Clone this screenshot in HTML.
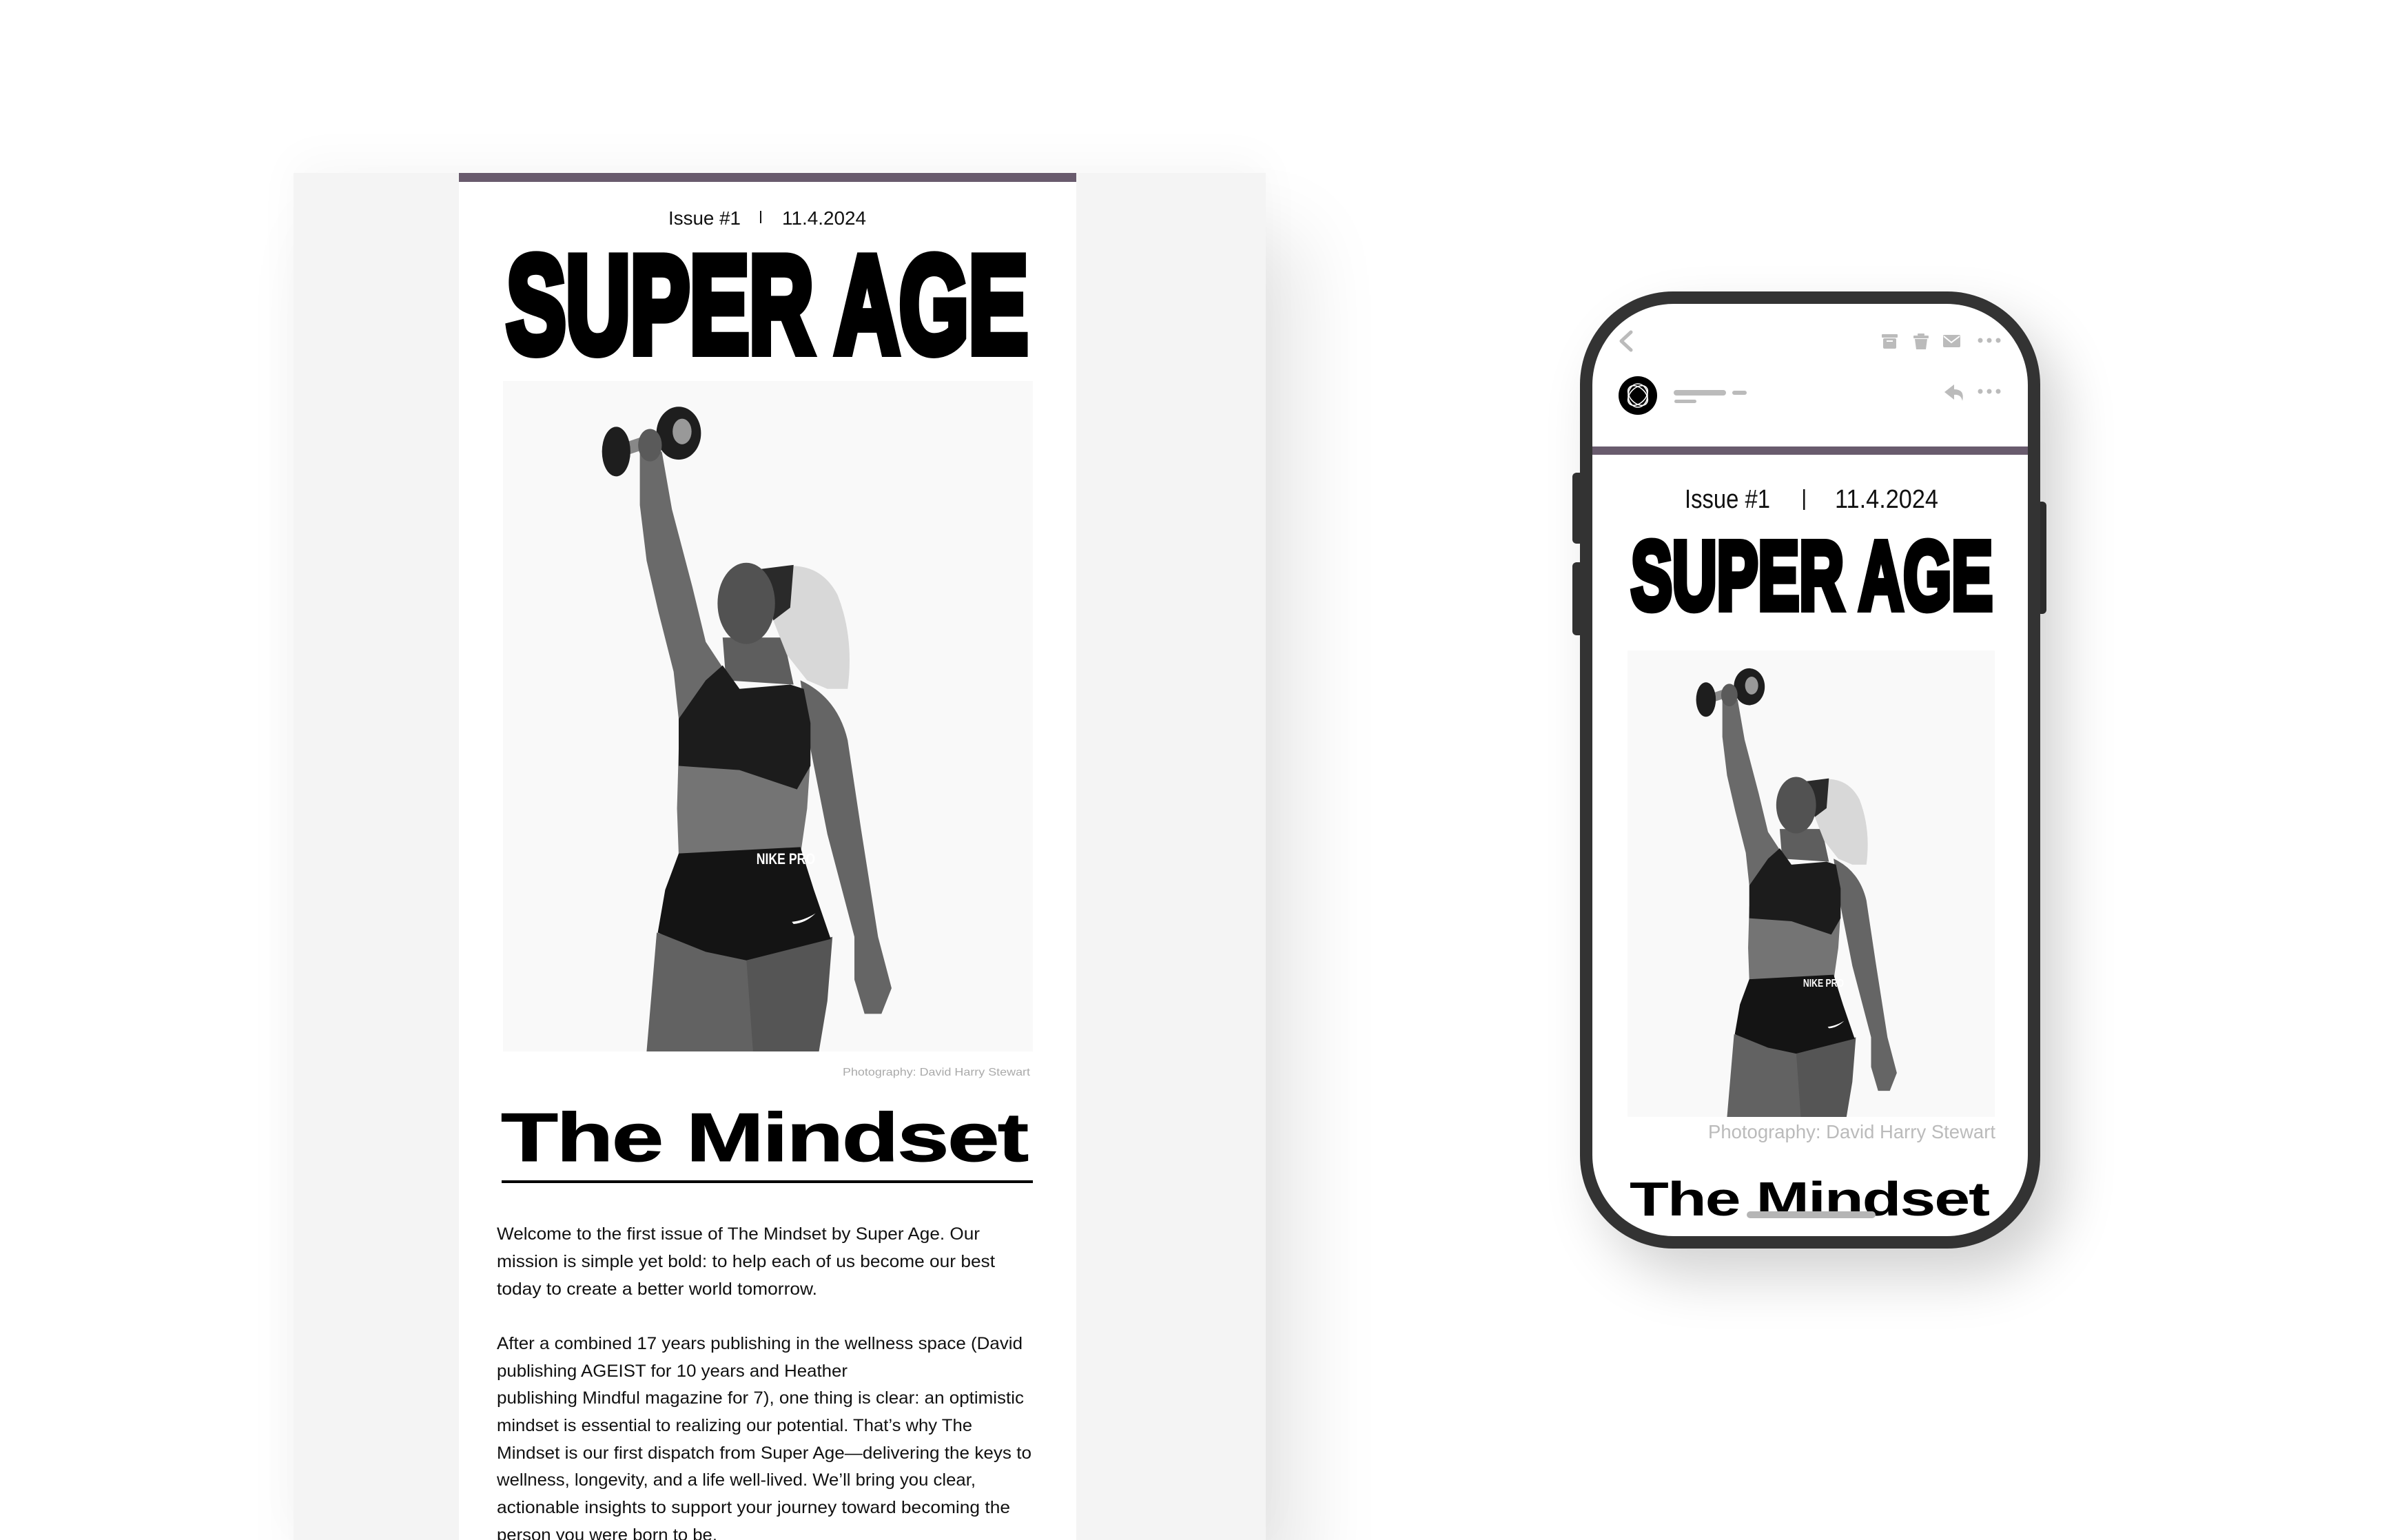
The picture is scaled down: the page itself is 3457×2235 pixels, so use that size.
<!DOCTYPE html>
<html><head><meta charset="utf-8">
<style>
html,body{margin:0;padding:0;background:#fff;width:3457px;height:2235px;overflow:hidden;}
body{position:relative;font-family:"Liberation Sans",sans-serif;}
.panel{position:absolute;left:426px;top:251px;width:1411px;height:1984px;background:#f4f4f4;box-shadow:50px 90px 110px rgba(0,0,0,0.10),0 -20px 60px rgba(0,0,0,0.03);}
.col{position:absolute;left:666px;top:251px;width:896px;height:1984px;background:#fff;}
.bar{position:absolute;left:666px;top:251px;width:896px;height:13px;background:#695b6d;}
.phone{position:absolute;left:2293px;top:423px;width:668px;height:1389px;border-radius:135px;background:#333;box-shadow:30px 40px 80px rgba(0,0,0,0.18);}
.screen{position:absolute;left:18px;top:18px;right:18px;bottom:18px;border-radius:118px;background:#fff;overflow:hidden;}
.btn{position:absolute;background:#333;border-radius:6px;}
svg.ov{position:absolute;left:0;top:0;}
</style></head><body>
<div class="panel"></div>
<div class="col"></div>
<div class="bar"></div>
<div class="btn" style="left:2282px;top:686px;width:16px;height:103px"></div>
<div class="btn" style="left:2282px;top:816px;width:16px;height:106px"></div>
<div class="btn" style="left:2956px;top:728px;width:14px;height:163px"></div>
<div class="phone"><div class="screen"></div></div>

<svg class="ov" width="3457" height="2235" viewBox="0 0 3457 2235" xmlns="http://www.w3.org/2000/svg">
<defs>
<g id="fig">
  <rect x="0" y="0" width="1568" height="1568" fill="#f9f9f9"/>
  <path d="M455,1290 L720,1350 L790,1568 L425,1568 Z" fill="#626262"/>
  <path d="M720,1350 L975,1300 L960,1450 L935,1568 L740,1568 Z" fill="#555"/>
  <path d="M880,700 Q990,740 1020,840 L1060,1050 L1110,1300 L1150,1420 L1120,1480 L1070,1480 L1040,1400 L1040,1300 L960,1060 L910,860 Z" fill="#656565"/>
  <path d="M405,170 L470,165 L500,300 L560,480 L600,610 L650,670 L560,760 L520,790 L505,680 L460,540 L425,420 L405,290 Z" fill="#6a6a6a"/>
  <path d="M520,860 L910,880 L900,1000 L880,1110 L520,1110 L515,1000 Z" fill="#747474"/>
  <path d="M650,600 L830,600 L860,710 L660,700 Z" fill="#5e5e5e"/>
  <path d="M790,440 Q930,410 990,500 Q1040,600 1020,720 L960,720 L900,700 L840,640 L800,560 Z" fill="#d8d8d8"/>
  <path d="M760,440 L860,430 L850,530 L800,560 Z" fill="#2a2a2a"/>
  <ellipse cx="720" cy="520" rx="85" ry="95" fill="#525252"/>
  <path d="M520,790 L600,700 L650,665 L700,720 L850,710 L890,720 L910,800 L910,900 L870,955 L700,910 L520,900 Z" fill="#1c1c1c"/>
  <path d="M520,1105 L880,1090 L920,1190 L970,1305 L720,1355 L600,1335 L458,1290 L480,1190 Z" fill="#141414"/>
  <text x="750" y="1130" font-family="Liberation Sans,sans-serif" font-weight="bold" font-size="36" fill="#fff">NIKE PRO</text>
  <path d="M855,1265 Q890,1262 925,1245 Q895,1268 860,1270 Z" fill="#fff"/>
  <rect x="350" y="130" width="130" height="30" fill="#888" transform="rotate(-15 415 145)"/>
  <ellipse cx="335" cy="165" rx="42" ry="58" fill="#1e1e1e"/>
  <ellipse cx="520" cy="122" rx="66" ry="62" fill="#1e1e1e"/>
  <ellipse cx="530" cy="118" rx="28" ry="30" fill="#999"/>
  <ellipse cx="435" cy="150" rx="35" ry="38" fill="#5a5a5a"/>
</g>
<clipPath id="scr"><rect x="2311" y="441" width="632" height="1353" rx="118"/></clipPath>
</defs>

<g font-family="Liberation Sans, sans-serif">
  <text x="970" y="326" font-size="28" fill="#111" textLength="105" lengthAdjust="spacingAndGlyphs">Issue #1</text>
  <rect x="1103" y="306" width="2" height="18" fill="#111"/>
  <text x="1135" y="326" font-size="28" fill="#111" textLength="122" lengthAdjust="spacingAndGlyphs">11.4.2024</text>
  <text x="735" y="511" font-size="200" font-weight="bold" fill="#000" stroke="#000" stroke-width="14" stroke-linejoin="miter" textLength="757" lengthAdjust="spacingAndGlyphs">SUPER AGE</text>
  <g transform="translate(730,553) scale(0.4904,0.6205)"><use href="#fig"/></g>
  <text x="1495" y="1561" font-size="16" fill="#aaa" text-anchor="end" textLength="272" lengthAdjust="spacingAndGlyphs">Photography: David Harry Stewart</text>
  <text transform="translate(727,1685) scale(1.36,1)" x="0" y="0" font-size="100" font-weight="bold" fill="#000" letter-spacing="-2" stroke="#000" stroke-width="1">The Mindset</text>
  <rect x="728" y="1713" width="771" height="4" fill="#000"/>
  <g font-size="25" fill="#111">
    <text x="721" y="1799" textLength="701" lengthAdjust="spacingAndGlyphs">Welcome to the first issue of The Mindset by Super Age. Our</text>
    <text x="721" y="1839" textLength="723" lengthAdjust="spacingAndGlyphs">mission is simple yet bold: to help each of us become our best</text>
    <text x="721" y="1879" textLength="465" lengthAdjust="spacingAndGlyphs">today to create a better world tomorrow.</text>
    <text x="721" y="1958" textLength="763" lengthAdjust="spacingAndGlyphs">After a combined 17 years publishing in the wellness space (David</text>
    <text x="721" y="1998" textLength="509" lengthAdjust="spacingAndGlyphs">publishing AGEIST for 10 years and Heather</text>
    <text x="721" y="2037" textLength="765" lengthAdjust="spacingAndGlyphs">publishing Mindful magazine for 7), one thing is clear: an optimistic</text>
    <text x="721" y="2077" textLength="690" lengthAdjust="spacingAndGlyphs">mindset is essential to realizing our potential. That’s why The</text>
    <text x="721" y="2117" textLength="776" lengthAdjust="spacingAndGlyphs">Mindset is our first dispatch from Super Age—delivering the keys to</text>
    <text x="721" y="2156" textLength="695" lengthAdjust="spacingAndGlyphs">wellness, longevity, and a life well-lived. We’ll bring you clear,</text>
    <text x="721" y="2196" textLength="745" lengthAdjust="spacingAndGlyphs">actionable insights to support your journey toward becoming the</text>
    <text x="721" y="2236" textLength="320" lengthAdjust="spacingAndGlyphs">person you were born to be.</text>
  </g>
</g>

<g clip-path="url(#scr)" font-family="Liberation Sans, sans-serif">
  <path d="M2367,482 L2353,495 L2367,508" fill="none" stroke="#bbb" stroke-width="5" stroke-linecap="round" stroke-linejoin="round"/>
  <rect x="2731" y="485" width="23" height="5" rx="1" fill="#bbb"/>
  <rect x="2733" y="491" width="19" height="15" rx="2" fill="#bbb"/>
  <rect x="2738" y="494" width="9" height="2" fill="#fff"/>
  <rect x="2783" y="484" width="10" height="3" rx="1" fill="#bbb"/>
  <rect x="2777" y="487" width="22" height="4" rx="1" fill="#bbb"/>
  <path d="M2779,492 L2797,492 L2795,507 L2781,507 Z" fill="#bbb"/>
  <rect x="2820" y="486" width="25" height="18" rx="2" fill="#bbb"/>
  <path d="M2821,488 L2832,497 L2844,488" fill="none" stroke="#fff" stroke-width="2"/>
  <circle cx="2874" cy="494" r="3.5" fill="#bbb"/><circle cx="2887" cy="494" r="3.5" fill="#bbb"/><circle cx="2900" cy="494" r="3.5" fill="#bbb"/>
  <circle cx="2377" cy="574" r="28" fill="#000"/>
  <g fill="none" stroke="#fff" stroke-width="1.6">
    <ellipse cx="2377" cy="574" rx="17" ry="11" transform="rotate(45 2377 574)"/>
    <ellipse cx="2377" cy="574" rx="17" ry="11" transform="rotate(-45 2377 574)"/>
    <ellipse cx="2377" cy="574" rx="14" ry="17"/>
  </g>
  <rect x="2429" y="566" width="76" height="8" rx="4" fill="#bbb"/>
  <rect x="2514" y="567" width="21" height="6" rx="3" fill="#bbb"/>
  <rect x="2430" y="580" width="32" height="5" rx="2.5" fill="#bbb"/>
  <path d="M2836,558 L2822,569 L2836,580 L2836,573 Q2846,572 2848,582 Q2852,565 2836,565 Z" fill="#bbb"/>
  <circle cx="2874" cy="568" r="3.5" fill="#bbb"/><circle cx="2887" cy="568" r="3.5" fill="#bbb"/><circle cx="2900" cy="568" r="3.5" fill="#bbb"/>
  <rect x="2311" y="648" width="632" height="12" fill="#695b6d"/>
  <text x="2445" y="737" font-size="38" fill="#111" textLength="124" lengthAdjust="spacingAndGlyphs">Issue #1</text>
  <rect x="2617" y="710" width="2.5" height="30" fill="#111"/>
  <text x="2663" y="737" font-size="38" fill="#111" textLength="150" lengthAdjust="spacingAndGlyphs">11.4.2024</text>
  <text x="2367" y="884" font-size="141" font-weight="bold" fill="#000" stroke="#000" stroke-width="10" stroke-linejoin="miter" textLength="525" lengthAdjust="spacingAndGlyphs">SUPER AGE</text>
  <g transform="translate(2362,944) scale(0.3399,0.4318)"><use href="#fig"/></g>
  <text x="2896" y="1652" font-size="28" fill="#bbb" text-anchor="end" textLength="417" lengthAdjust="spacingAndGlyphs">Photography: David Harry Stewart</text>
  <text transform="translate(2365,1764) scale(1.33,1)" x="0" y="0" font-size="70" font-weight="bold" fill="#000" letter-spacing="-1.5">The Mindset</text>
  <rect x="2535" y="1758" width="187" height="10" rx="5" fill="#b5b5b5"/>
</g>
</svg>
</body></html>
